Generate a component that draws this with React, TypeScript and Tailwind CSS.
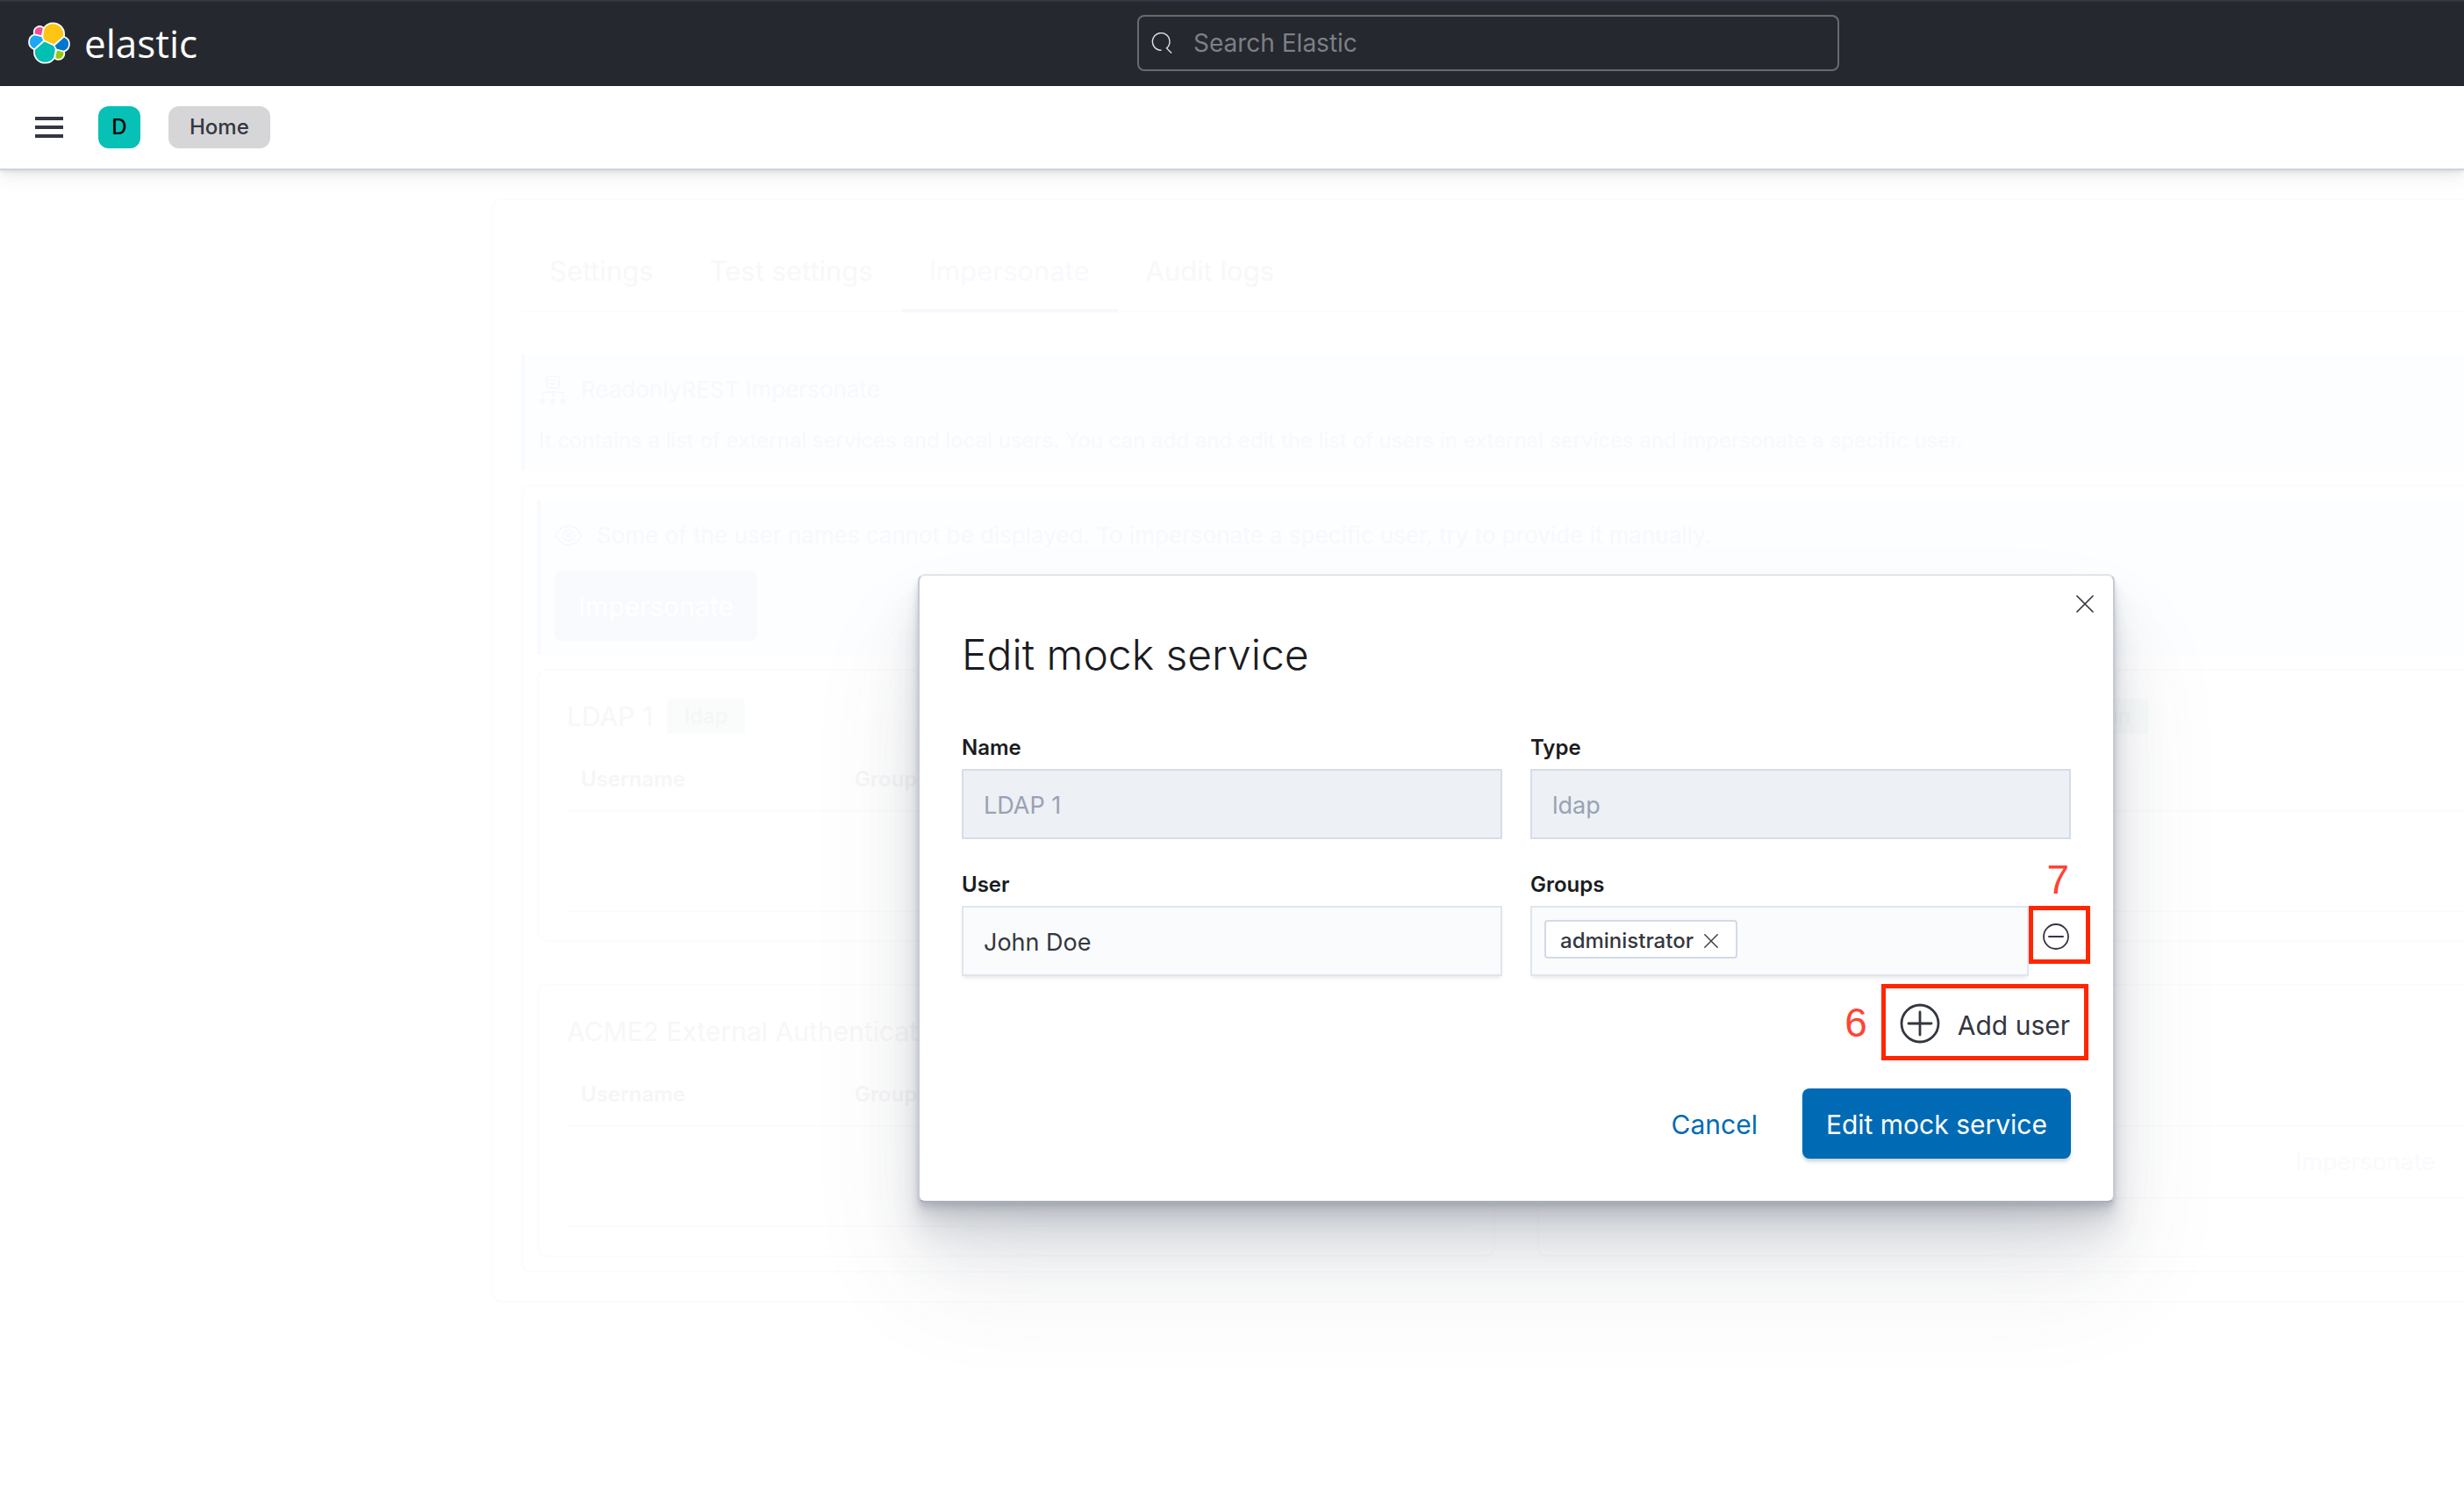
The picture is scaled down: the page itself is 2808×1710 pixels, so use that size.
import type { ReactNode } from 'react';

const YELLOW_BLOB =
  'M12.58 13.787l7.002 3.211 7.066-6.213a7.849 7.849 0 0 0 .152-1.557c0-4.287-3.487-7.774-7.774-7.774a7.77 7.77 0 0 0-6.42 3.396L11.42 10.97z';
const PINK_BLOB = 'M5.288 9.067l4.8 1.137L11.14 4.72a3.785 3.785 0 0 0-6.05 3.05c0 .45.066.881.197 1.297z';
const SKY_BLOB =
  'M4.872 10.214a5.294 5.294 0 0 0-3.595 4.98 5.298 5.298 0 0 0 3.415 4.947l6.733-6.1-1.237-2.65z';
const GREEN_BLOB =
  'M20.873 27.184a3.778 3.778 0 0 0 2.285.786 3.791 3.791 0 0 0 3.789-3.789c0-.46-.079-.9-.23-1.316l-4.788-1.122z';
const BLUE_BLOB =
  'M21.848 20.563l5.27 1.237a5.294 5.294 0 0 0 3.595-4.986 5.294 5.294 0 0 0-3.401-4.938l-6.894 6.048z';

function ElasticLogo() {
  return (
    <svg className="size-12" viewBox="0 0 32 32" aria-hidden="true">
      <g fill="#fff" stroke="#fff" strokeWidth="2.4" strokeLinejoin="round">
        <path d={YELLOW_BLOB} />
        <path d={YELLOW_BLOB} transform="rotate(180 16 16)" />
        <path d={PINK_BLOB} />
        <path d={SKY_BLOB} />
        <path d={GREEN_BLOB} />
        <path d={BLUE_BLOB} />
      </g>
      <path fill="#FEC514" d={YELLOW_BLOB} />
      <path fill="#00BFB3" d={YELLOW_BLOB} transform="rotate(180 16 16)" />
      <path fill="#F04E98" d={PINK_BLOB} />
      <path fill="#1BA9F5" d={SKY_BLOB} />
      <path fill="#93C90E" d={GREEN_BLOB} />
      <path fill="#0077CC" d={BLUE_BLOB} />
    </svg>
  );
}

function SearchIcon() {
  return (
    <svg className="size-6 text-[#dfe1e6]" viewBox="0 0 24 24" fill="none" stroke="currentColor" strokeWidth="1.4" aria-hidden="true">
      <path d="M11.5 20.2a9.8 9.8 0 1 1 6-2.3l5.6 5.6" />
    </svg>
  );
}

function CrossIcon({ className }: { className: string }) {
  return (
    <svg className={className} viewBox="0 0 20 20" fill="none" stroke="currentColor" strokeWidth="1.7" strokeLinecap="round" aria-hidden="true">
      <path d="M1 1l18 18M19 1L1 19" />
    </svg>
  );
}

function MinusCircleIcon() {
  return (
    <svg className="size-[30px]" viewBox="0 0 30 30" fill="none" stroke="currentColor" strokeWidth="1.8" aria-hidden="true">
      <circle cx="15" cy="15" r="14" />
      <path d="M7 15h16" strokeLinecap="round" strokeWidth="2" />
    </svg>
  );
}

function PlusCircleIcon() {
  return (
    <svg className="size-[46px]" viewBox="0 0 46 46" fill="none" stroke="currentColor" strokeWidth="2.8" aria-hidden="true">
      <circle cx="23" cy="23" r="21" />
      <path d="M10 23h26M23 10v26" strokeLinecap="round" />
    </svg>
  );
}

function NetworkIcon() {
  return (
    <svg className="size-8 text-[#f6f9fd]" viewBox="0 0 32 32" fill="none" stroke="currentColor" strokeWidth="2" aria-hidden="true">
      <rect x="9" y="1" width="14" height="13" rx="2" />
      <path d="M12.500 5.500h7M12.500 9.500h7M16 17v7M4 24v-5h24v5" />
      <g fill="currentColor" stroke="none">
        <circle cx="4" cy="29" r="3" />
        <circle cx="16" cy="29" r="3" />
        <circle cx="28" cy="29" r="3" />
      </g>
    </svg>
  );
}

function EyeIcon() {
  return (
    <svg className="size-8 text-[#f6f9fd]" viewBox="0 0 32 32" fill="none" stroke="currentColor" strokeWidth="2" aria-hidden="true">
      <path d="M1 16C5 9 10 5 16 5s11 4 15 11c-4 7-9 11-15 11S5 23 1 16z" />
      <circle cx="16" cy="16" r="6" />
      <circle cx="16" cy="16" r="2" />
    </svg>
  );
}

function Header() {
  return (
    <header className="relative z-10">
      <div className="grid h-[98px] grid-cols-[1264px_800px_1fr] items-center border-t-2 border-[#343741] bg-[#25282f] pb-0.5 pl-8">
        <a href="#home" className="flex items-center gap-4 text-white">
          <ElasticLogo />
          <span className="font-['Open_Sans'] text-[44px] leading-[56px] font-normal">elastic</span>
        </a>
        <label className="flex h-16 items-center gap-6 rounded-lg border-2 border-[#6a6b6e] px-3.5">
          <SearchIcon />
          <input
            type="search"
            aria-label="Search Elastic"
            placeholder="Search Elastic"
            className="min-w-0 flex-1 bg-transparent text-[28px] leading-9 text-white outline-none placeholder:text-[#7e7f83]"
          />
        </label>
      </div>
      <div className="flex h-24 items-center border-b-2 border-[#ccd3e0] bg-white pl-10 shadow-[0_1px_3px_rgba(0,0,0,0.07),0_4px_8px_rgba(0,0,0,0.05),0_9px_20px_rgba(0,0,0,0.06)]">
        <button type="button" aria-label="Toggle navigation" className="flex w-8 flex-col gap-1.5">
          <span className="h-1 bg-[#343741]" />
          <span className="h-1 bg-[#343741]" />
          <span className="h-1 bg-[#343741]" />
        </button>
        <button type="button" className="ml-10 size-12 rounded-xl bg-[#07c0b6] text-[24px] leading-8 font-medium text-black">
          D
        </button>
        <a href="#home" className="ml-8 flex h-12 items-center rounded-xl bg-[#d6d6d8] px-6 text-[24px] leading-8 font-medium text-[#343741]">
          Home
        </a>
      </div>
    </header>
  );
}

const TABS = ['Settings', 'Test settings', 'Impersonate', 'Audit logs'];

function Tabs() {
  return (
    <div role="tablist" className="flex border-b-2 border-[#fcfcfd]">
      {TABS.map((tab) => (
        <button
          key={tab}
          type="button"
          role="tab"
          aria-selected={tab === 'Impersonate'}
          className={
            tab === 'Impersonate'
              ? '-mb-0.5 h-24 border-b-4 border-[#f7f8fd] px-8 pt-1.5 text-[31px] leading-10 text-[#f8f9fd]'
              : '-mb-0.5 h-24 px-8 pt-0.5 text-[31px] leading-10 text-[#f7f8f8]'
          }
        >
          {tab}
        </button>
      ))}
    </div>
  );
}

type ServicePanelProps = { title: string; badge: string; rowClass: string; bleed?: boolean; action?: ReactNode };

function ServicePanel({ title, badge, rowClass, bleed, action }: ServicePanelProps) {
  return (
    <section
      className={
        bleed
          ? 'rounded-l-xl border-2 border-r-0 border-[#fcfcfd] bg-white py-8 pl-8'
          : 'rounded-xl border-2 border-[#fcfcfd] bg-white p-8'
      }
    >
      <div className="flex h-10 items-center gap-4 whitespace-nowrap">
        <h3 className="text-[30px] leading-10 text-[#f7f7f8]">{title}</h3>
        <span className="flex h-10 items-center rounded bg-[#fafcfc] px-5 text-[24px] leading-8 font-medium text-[#f4f7f7]">{badge}</span>
      </div>
      <table className="mt-4 w-full table-fixed border-collapse">
        <thead>
          <tr className="h-[72px] border-b-2 border-[#fbfcfc] text-left text-[24px] leading-8 text-[#f6f6f7]">
            <th className="w-[312px] px-4 font-semibold">Username</th>
            <th className="px-4 font-semibold">Groups</th>
            <th className="w-[192px]" aria-label="Actions" />
          </tr>
        </thead>
        <tbody>
          <tr className={rowClass}>
            <td />
            <td />
            <td className="text-[27px] leading-9 text-[#f9fafd]">{action}</td>
          </tr>
        </tbody>
      </table>
    </section>
  );
}

function Page() {
  return (
    <main className="mt-8 ml-[560px] rounded-l-xl border-2 border-r-0 border-[#fcfcfc] bg-white py-8 pl-8">
      <Tabs />
      <section className="mt-12 border-l-4 border-[#f8fafe] bg-[#fdfeff] pt-5 pr-4 pb-3.5 pl-4">
        <h2 className="flex items-center gap-4 text-[26px] leading-10 text-[#f6f9fd]">
          <NetworkIcon />
          ReadonlyREST Impersonate
        </h2>
        <p className="mt-[18px] text-[24px] leading-10 text-[#f8f9fa]">
          It contains a list of external services and local users. You can add and edit the list of users in external services and
          impersonate a specific user.
        </p>
      </section>
      <div className="mt-4 rounded-l-xl border-2 border-r-0 border-[#fcfcfd] py-4 pl-4">
        <section className="border-l-4 border-[#f8fafe] bg-[#fdfeff] pt-5 pb-4 pl-4">
          <h2 className="flex items-center gap-4 text-[26px] leading-10 text-[#f6f9fd]">
            <EyeIcon />
            Some of the user names cannot be displayed. To impersonate a specific user, try to provide it manually.
          </h2>
          <button type="button" className="mt-5 h-20 rounded-lg bg-[#f8fafd] px-[27px] pt-0.5 text-[30px] leading-10 text-white">
            Impersonate
          </button>
        </section>
        <div className="mt-4 grid grid-cols-[1092px_1fr] gap-12">
          <ServicePanel title="LDAP 1" badge="ldap" rowClass="h-[114px] border-b-2 border-[#fbfcfc]" />
          <ServicePanel
            title="ACME1 External Authentication service"
            badge="conn"
            bleed
            rowClass="h-[114px] border-b-2 border-[#fbfcfc]"
          />
          <ServicePanel title="ACME2 External Authentication service" badge="conn" rowClass="h-[114px] border-b-2 border-[#fbfcfc]" />
          <ServicePanel
            title="Local users"
            badge="local"
            bleed
            rowClass="h-[82px] border-b-2 border-[#fbfcfc]"
            action={<button type="button">Impersonate</button>}
          />
        </div>
      </div>
    </main>
  );
}

function Field({ id, label, value, disabled }: { id: string; label: string; value: string; disabled?: boolean }) {
  return (
    <div className="flex flex-col gap-1.5">
      <label htmlFor={id} className="text-[24px] leading-9 font-semibold text-[#1a1c21]">
        {label}
      </label>
      <input
        id={id}
        defaultValue={value}
        disabled={disabled}
        className="h-20 w-full border-2 border-[#e0e5ee] bg-[#fafbfc] px-[23px] pt-0.5 text-[27px] leading-9 text-[#343741] shadow-[0_4px_4px_-2px_rgba(152,162,179,0.25)] disabled:border-[#d6dde8] disabled:bg-[#edf0f5] disabled:text-[#98a2b3] disabled:shadow-none"
      />
    </div>
  );
}

function GroupsField() {
  return (
    <div className="relative flex flex-col gap-1.5">
      <label htmlFor="groups" className="text-[24px] leading-9 font-semibold text-[#1a1c21]">
        Groups
      </label>
      <div className="-mr-[22px] flex items-start">
        <div className="flex h-20 min-w-0 flex-1 items-start border-2 border-[#e0e5ee] bg-[#fafbfc] p-3.5 shadow-[0_4px_4px_-2px_rgba(152,162,179,0.25)]">
          <span className="flex h-11 items-center gap-3 rounded border-2 border-[#d3dae6] bg-white pt-1 pr-5 pl-4 text-[24px] leading-8 font-medium text-[#343741]">
            administrator
            <button type="button" aria-label="Remove administrator">
              <CrossIcon className="size-4" />
            </button>
          </span>
          <input id="groups" className="h-11 min-w-0 flex-1 bg-transparent px-2 text-[27px] outline-none" />
        </div>
        <button
          type="button"
          aria-label="Remove user"
          className="flex h-[66px] w-[70px] items-center border-5 border-[#ff2600] pt-1 pl-[11px] text-[#343741]"
        >
          <MinusCircleIcon />
        </button>
      </div>
      <span className="absolute -top-3.5 right-0.5 font-['Liberation_Sans'] text-[46px] leading-[52px] text-[#ff4336]">7</span>
    </div>
  );
}

function EditDialog() {
  return (
    <div className="absolute inset-0 z-20 flex items-center justify-center pt-[314px] pl-[648px]">
      <section
        role="dialog"
        aria-labelledby="dialog-title"
        className="relative w-[1364px] rounded-lg border-2 border-t-[#e3e4e8] border-r-[#c6cad7] border-b-[#aaafba] border-l-[#c6cad7] bg-white px-12 pt-14 pb-12 shadow-[0_80px_128px_rgba(65,78,101,0.1),0_48px_64px_rgba(65,78,101,0.1),0_32px_32px_rgba(65,78,101,0.1),0_16px_16px_rgba(65,78,101,0.1),0_8px_8px_rgba(65,78,101,0.1),0_4px_4px_rgba(65,78,101,0.1)]"
      >
        <button type="button" aria-label="Close" className="absolute top-2 right-2 flex size-12 items-center justify-center text-[#343741]">
          <CrossIcon className="size-5" />
        </button>
        <h1 id="dialog-title" className="pt-0.5 text-[48px] leading-16 font-light text-[#1a1c21]">
          Edit mock service
        </h1>
        <form className="mt-14">
          <div className="grid grid-cols-2 gap-x-8 gap-y-[34px]">
            <Field id="name" label="Name" value="LDAP 1" disabled />
            <Field id="type" label="Type" value="ldap" disabled />
            <Field id="user" label="User" value="John Doe" />
            <GroupsField />
          </div>
          <div className="-mr-5 mt-[9px] flex items-center justify-end gap-4">
            <span className="font-['Liberation_Sans'] text-[46px] leading-[52px] text-[#ff4336]">6</span>
            <button
              type="button"
              className="flex h-[87px] items-center gap-5 border-5 border-[#ff2600] px-4 pt-0.5 text-[30px] leading-10 text-[#343741]"
            >
              <PlusCircleIcon />
              <span className="pt-1">Add user</span>
            </button>
          </div>
          <div className="mt-8 flex items-center justify-end gap-6">
            <button type="button" className="h-20 px-[27px] pt-0.5 text-[30px] leading-10 text-[#006bb4]">
              Cancel
            </button>
            <button
              type="submit"
              className="h-20 rounded-lg bg-[#006bb4] px-[27px] pt-0.5 text-[30px] leading-10 text-white shadow-[0_4px_4px_-1px_rgba(54,97,126,0.3)]"
            >
              Edit mock service
            </button>
          </div>
        </form>
      </section>
    </div>
  );
}

export default function App() {
  return (
    <div className="relative min-h-screen overflow-hidden bg-white font-['Inter',sans-serif]">
      <Header />
      <Page />
      <EditDialog />
    </div>
  );
}
